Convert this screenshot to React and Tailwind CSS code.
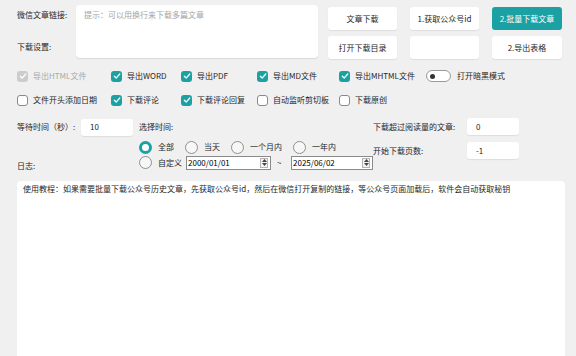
import React from "react";

const TEAL = "bg-[#1ba1a3]";

function Check({ state = "on", label }) {
    // state: on | off | disabled
    return (
        <div className="flex items-center gap-[5px]">
            {state === "off" ? (
                <span className="shrink-0 w-[11px] h-[11px] rounded-[3px] border border-[#8a8a8a] bg-white" />
            ) : (
                <span className={`shrink-0 w-[11px] h-[11px] rounded-[3px] flex items-center justify-center ${state === "disabled" ? "bg-[#cccccc]" : "bg-[#1ba1a3]"}`}>
                    <svg width="8" height="8" viewBox="0 0 8 8">
                        <polyline points="1.3,4.2 3.2,6 6.8,2" fill="none" stroke="white" strokeWidth="1.2" strokeLinecap="round" strokeLinejoin="round" />
                    </svg>
                </span>
            )}
            <span className={state === "disabled" ? "text-[#a8a8a8]" : "text-[#262626]"}>{label}</span>
        </div>
    );
}

function Radio({ checked, label, w = "" }) {
    return (
        <div className={`shrink-0 flex items-center gap-[6px] ${w}`}>
            {checked ? (
                <span className="shrink-0 w-[13px] h-[13px] rounded-full border-[3px] border-[#1ba1a3] bg-white" />
            ) : (
                <span className="shrink-0 w-[13px] h-[13px] rounded-full border border-[#8f8f8f] bg-[#f7f7f7]" />
            )}
            <span className="text-[#262626]">{label}</span>
        </div>
    );
}

function DateBox({ value, w }) {
    return (
        <div className={`shrink-0 h-[14px] ${w} bg-white border border-[#8a8a8a] flex items-center justify-between pl-[1px] pr-[2px]`}>
            <span className="text-[8px] text-black leading-none">{value}</span>
            <span className="w-[8px] h-[10px] border border-[#b5b5b5] bg-[#f3f3f3] flex flex-col items-center justify-center gap-[1px]">
                <svg width="5" height="3" viewBox="0 0 5 3"><polygon points="0,3 2.5,0 5,3" fill="#444" /></svg>
                <svg width="5" height="3" viewBox="0 0 5 3"><polygon points="0,0 5,0 2.5,3" fill="#444" /></svg>
            </span>
        </div>
    );
}

const Btn = ({ children, primary }) => (
    <button
        className={`h-[23px] rounded-[3px] text-[8px] flex items-center justify-center ${primary ? `${TEAL} text-white` : "bg-white text-[#262626] shadow-[0_1px_1px_rgba(0,0,0,0.08)]"}`}
    >
        {children}
    </button>
);

const Field = ({ value }) => (
    <div className="shrink-0 w-[52px] h-[17px] bg-white rounded-[3px] shadow-[0_1px_1px_rgba(0,0,0,0.08)] flex items-center pl-[9px] text-[8px] text-[#262626]">
        {value}
    </div>
);

export default function App() {
    return (
        <div
            className="w-[576px] h-[356px] bg-[#f0f0f0] overflow-hidden flex flex-col text-[8px] text-[#262626] leading-none whitespace-nowrap"
            style={{ fontFamily: '"Noto Sans CJK SC", "Noto Sans", sans-serif' }}
        >
            {/* top: link input + buttons */}
            <div className="flex items-start pt-[5px] pl-[17px]">
                <div className="w-[59px] h-[53px] flex flex-col justify-between pt-[6px] pb-[7px]">
                    <span>微信文章链接:</span>
                    <span>下载设置:</span>
                </div>
                <div className="w-[242px] h-[53px] bg-white rounded-[4px] shadow-[0_1px_1px_rgba(0,0,0,0.1)] pl-[8px] pt-[6px] text-[#a5a5a5]">
                    提示：可以用换行来下载多篇文章
                </div>
                <div className="ml-[10px] mt-[2px] grid grid-cols-[69px_69px_70px] gap-x-[13px] gap-y-[6px]">
                    <Btn>文章下载</Btn>
                    <Btn>1.获取公众号id</Btn>
                    <Btn primary>2.批量下载文章</Btn>
                    <Btn>打开下载目录</Btn>
                    <Btn></Btn>
                    <Btn>2.导出表格</Btn>
                </div>
            </div>

            {/* options */}
            <div className="mt-[5px] pl-[17px] grid grid-cols-[94px_70px_76px_82px_auto] auto-rows-[24px] items-center">
                <Check state="disabled" label="导出HTML文件" />
                <Check label="导出WORD" />
                <Check label="导出PDF" />
                <Check label="导出MD文件" />
                <div className="flex items-center">
                    <Check label="导出MHTML文件" />
                    <span className="ml-[11px] w-[25px] h-[12px] rounded-full border border-[#9a9a9a] bg-white flex items-center pl-[3px]">
                        <span className="w-[5px] h-[5px] rounded-full bg-[#333]" />
                    </span>
                    <span className="ml-[6px]">打开暗黑模式</span>
                </div>
                <Check state="off" label="文件开头添加日期" />
                <Check label="下载评论" />
                <Check label="下载评论回复" />
                <Check state="off" label="自动监听剪切板" />
                <Check state="off" label="下载原创" />
            </div>

            {/* time + paging */}
            <div className="mt-[5px] h-[64px] pl-[17px] flex items-start">
                <div className="w-[121px] shrink-0 flex flex-col">
                    <div className="h-[20px] flex items-center">
                        <span className="w-[64px]">等待时间（秒）:</span>
                        <Field value="10" />
                    </div>
                    <span className="mt-[25px]">日志:</span>
                </div>
                <div className="w-[235px] shrink-0 flex flex-col">
                    <div className="h-[20px] flex items-center pl-[1px]">选择时间:</div>
                    <div className="mt-[2px] h-[16px] flex items-center pl-[1px]">
                        <Radio checked label="全部" w="w-[46px]" />
                        <Radio label="当天" w="w-[46px]" />
                        <Radio label="一个月内" w="w-[62px]" />
                        <Radio label="一年内" />
                    </div>
                    <div className="h-[15px] flex items-center pl-[1px]">
                        <Radio label="自定义" />
                        <div className="ml-[4px]"><DateBox value="2000/01/01" w="w-[85px]" /></div>
                        <span className="ml-[6px] w-[16px]">~</span>
                        <DateBox value="2025/06/02" w="w-[82px]" />
                    </div>
                </div>
                <div className="flex flex-col gap-[7px] pt-[1px]">
                    <div className="h-[17px] flex items-center">
                        <span className="w-[94px]">下载超过阅读量的文章:</span>
                        <Field value="0" />
                    </div>
                    <div className="h-[17px] flex items-center">
                        <span className="w-[94px]">开始下载页数:</span>
                        <Field value="-1" />
                    </div>
                </div>
            </div>

            {/* log */}
            <div className="ml-[17px] w-[548px] flex-1 bg-white rounded-t-[4px] px-[6px] pt-[4px]">
                使用教程：如果需要批量下载公众号历史文章，先获取公众号id，然后在微信打开复制的链接，等公众号页面加载后，软件会自动获取秘钥
            </div>
        </div>
    );
}
